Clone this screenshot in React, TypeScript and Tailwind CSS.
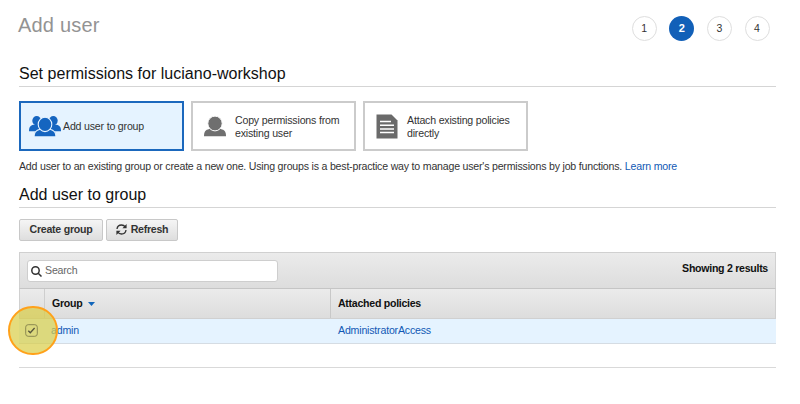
import React from 'react';

function GroupIcon() {
  return (
    <svg width="32" height="21" viewBox="0 0 32 21" fill="#1565c0" className="shrink-0">
      <ellipse cx="7.7" cy="4.8" rx="4.4" ry="4.7" />
      <path d="M0 15.2c0-4 1.3-5.600 4.500-6.400h5l2 6.400z" />
      <ellipse cx="24.300" cy="4.800" rx="4.400" ry="4.700" />
      <path d="M32 15.200c0-4-1.300-5.600-4.500-6.400h-5l-2 6.400z" />
      <g stroke="#e5f3ff" strokeWidth="1.100">
        <path d="M5 20.900c0-4.800 1.800-6.700 6-7.600h10c4.200.9 6 2.800 6 7.600z" />
        <ellipse cx="16" cy="8.400" rx="6.800" ry="7.200" />
      </g>
    </svg>
  );
}

function UserIcon() {
  return (
    <svg width="22" height="21" viewBox="0 0 22 21" fill="#6f6f6f" className="shrink-0">
      <path d="M0 20.300c0-4.500 1.300-6.300 5.300-7.200h11.400c4 .9 5.300 2.700 5.300 7.200z" />
      <ellipse cx="11" cy="7.500" rx="7.200" ry="7.400" stroke="#fff" strokeWidth="1" />
    </svg>
  );
}

function DocumentIcon() {
  return (
    <svg width="22" height="25" viewBox="0 0 22 25" className="shrink-0">
      <path d="M0.500 0.500h15l6 6v18h-21z" fill="#6a6a6a" />
      <path d="M4 7.500h11M4 11.200h14M4 14.900h14M4 18.600h14" stroke="#fff" strokeWidth="1.500" />
    </svg>
  );
}

function RefreshIcon() {
  return (
    <svg width="11" height="11" viewBox="0 0 11 11" fill="none" stroke="#333" strokeWidth="1.300" className="-mt-px shrink-0">
      <path d="M1 5C1.300 2.500 3.200 1 5.500 1c1.700 0 2.900.7 3.900 2.200M10 6c-.3 2.500-2.200 4-4.500 4-1.700 0-2.900-.7-3.900-2.200" />
      <path d="M10.600 0v4.200H6.400zM.4 11V6.800h4.200z" fill="#333" stroke="none" />
    </svg>
  );
}

function Step({ n, active = false }: { n: number; active?: boolean }) {
  return (
    <div
      className={
        active
          ? 'flex size-[25px] items-center justify-center rounded-full bg-[#1260b8] text-[11px] font-bold text-white'
          : 'flex size-[25px] items-center justify-center rounded-full border border-[#dedede] text-[10.500px] text-[#333]'
      }
    >
      {n}
    </div>
  );
}

export default function App() {
  return (
    <main className="h-[404px] w-[800px] overflow-hidden bg-white pr-6 pl-[19px] font-['Liberation_Sans',Arial,sans-serif] text-[10.600px] tracking-[-0.190px] text-[#333]">
      <header className="flex h-[60px] items-start justify-between pr-[6.500px] tracking-normal">
        <h1 className="-ml-px pt-[13px] text-[20px] leading-6 tracking-[0.200px] text-[#939393]">Add user</h1>
        <nav className="flex gap-[12.600px] pt-4">
          <Step n={1} />
          <Step n={2} active />
          <Step n={3} />
          <Step n={4} />
        </nav>
      </header>

      <h2 className="h-[27px] border-b border-[#d5d5d5] pt-[5px] text-[16px] leading-[18px] tracking-[0.020px] text-[#111]">
        Set permissions for luciano-workshop
      </h2>

      <div className="mt-3.5 flex gap-[7.500px]">
        <div className="flex h-[50px] w-[164.500px] items-center gap-[2px] border-2 border-[#1b68bd] bg-[#e5f3ff] pl-[8px]">
          <GroupIcon />
          <span className="pt-px">Add user to group</span>
        </div>
        <div className="flex h-[50px] w-[164.500px] items-center gap-[9px] border-2 border-[#cbcbcb] pl-[11px] leading-[13px]">
          <UserIcon />
          <span className="pt-px">Copy permissions from<br />existing user</span>
        </div>
        <div className="flex h-[50px] w-[164.500px] items-center gap-[9px] border-2 border-[#cbcbcb] pl-[11px] leading-[13px]">
          <DocumentIcon />
          <span className="pt-px">Attach existing policies<br />directly</span>
        </div>
      </div>

      <p className="pt-[7px] leading-4 tracking-[-0.205px] whitespace-nowrap">
        Add user to an existing group or create a new one. Using groups is a best-practice way to manage user's permissions by job functions.{' '}
        <a className="text-[#1159b5]">Learn more</a>
      </p>

      <h2 className="mt-[7px] h-[27px] border-b border-[#d5d5d5] pt-[5px] text-[16px] leading-[18px] tracking-normal text-[#111]">
        Add user to group
      </h2>

      <div className="mt-[11px] flex gap-[3px] font-bold tracking-[-0.250px]">
        <button className="flex h-[22px] w-[84px] items-center justify-center rounded-[2px] border border-[#c8c8c8] bg-linear-to-b from-[#f5f5f5] to-[#dedede]">
          Create group
        </button>
        <button className="flex h-[22px] w-[72px] items-center justify-center gap-[4px] rounded-[2px] border border-[#c8c8c8] bg-linear-to-b from-[#f5f5f5] to-[#dedede]">
          <RefreshIcon />
          Refresh
        </button>
      </div>

      <section className="relative mt-[11px]">
        <div className="flex h-[37px] items-start justify-between border border-b-[#c5c5c5] border-[#d0d0d0] bg-linear-to-b from-[#ebebeb] to-[#dddddd] pt-[7px] pr-[7px] pl-[7px]">
          <div className="flex h-[22px] w-[251px] items-center gap-[3px] rounded-[3px] border border-[#cecece] bg-white pl-[3px] text-[#666]">
            <svg width="11" height="11" viewBox="0 0 11 11" fill="none" stroke="#333" strokeWidth="1.500">
              <circle cx="4.500" cy="4.500" r="3.700" />
              <path d="M7.200 7.200l3.300 3.300" />
            </svg>
            Search
          </div>
          <span className="-mt-px leading-[18px] font-bold tracking-[-0.280px] text-[#111]">Showing 2 results</span>
        </div>
        <div className="grid h-[30px] grid-cols-[25px_286px_1fr] border-x border-b border-[#d0d0d0] bg-linear-to-b from-[#ebebeb] to-[#dddddd] font-bold tracking-[-0.280px] text-[#111]">
          <div className="border-r border-[#cecece]" />
          <div className="flex items-center gap-[6px] border-r border-[#c8c8c8] pl-[7px]">
            Group
            <svg width="7" height="4" viewBox="0 0 7 4" fill="#1166bb" className="mt-px"><path d="M0 0h7L3.500 4z" /></svg>
          </div>
          <div className="flex items-center pl-[7px]">Attached policies</div>
        </div>
        <div className="grid h-[25px] grid-cols-[32px_287px_1fr] items-center border-b border-[#d5dce3] bg-[#e5f3ff] text-[#1159b5]">
          <span />
          <a>admin</a>
          <a>AdministratorAccess</a>
        </div>
        <div className="h-6 border-b border-[#d9d9d9]" />
        <div className="absolute top-[54px] left-[-11.500px] flex h-[49px] w-[50px] items-center justify-center rounded-full border-2 border-[#ffa11a] bg-[#d9cd46]/70">
          <svg width="13" height="13" viewBox="0 0 13 13" fill="none" className="mr-[2px]">
            <rect x=".7" y=".7" width="11.600" height="11.600" rx="2.500" stroke="#8c8950" strokeWidth="1" />
            <path d="M3.300 6.700l2 2 4.300-4.700" stroke="#57563c" strokeWidth="1.300" />
          </svg>
        </div>
      </section>
    </main>
  );
}
